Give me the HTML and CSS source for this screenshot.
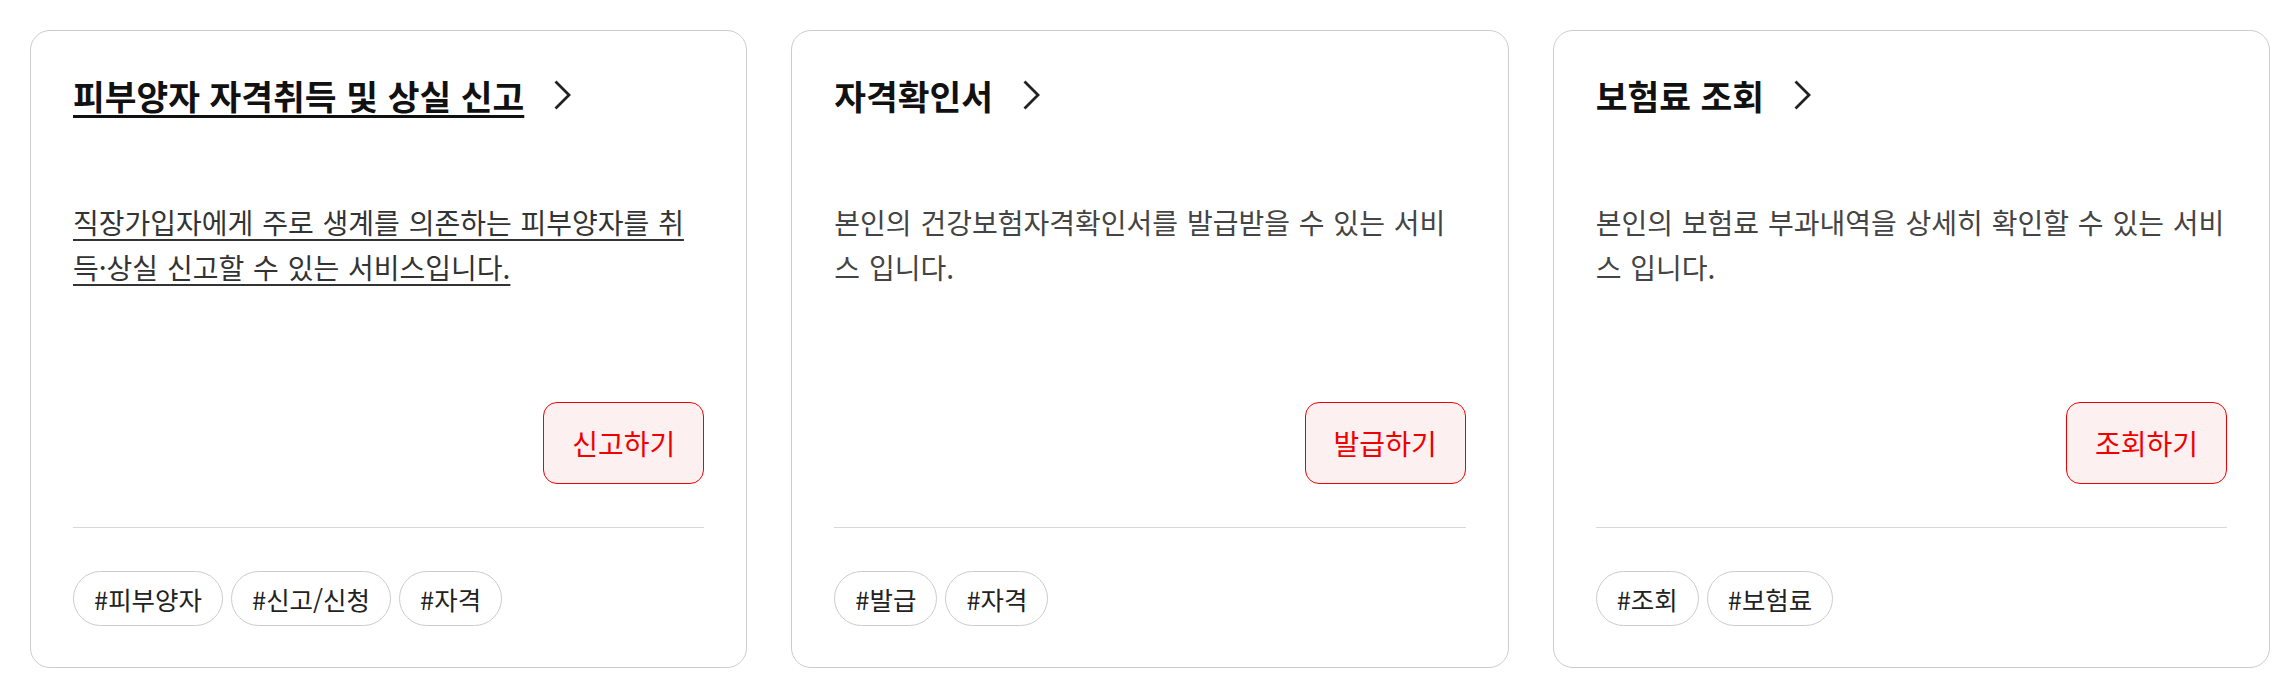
FILE: index.html
```html
<!DOCTYPE html>
<html lang="ko">
<head>
    <meta charset="UTF-8">
    <meta name="viewport" content="width=device-width, initial-scale=1.0">
    <title>자격 서비스</title>
    <link rel="stylesheet" href="styles.css">
</head>
<body>
    <main class="cards">
        <article class="card is-hover">
            <a class="card-title" href="#">
                <span>피부양자 자격취득 및 상실 신고</span>
                <svg class="chevron" viewBox="0 0 18 30" aria-hidden="true"><path d="M2.5 1.5 L16 15 L2.5 28.5"/></svg>
            </a>
            <p class="card-desc">직장가입자에게 주로 생계를 의존하는 피부양자를 취득·상실 신고할 수 있는 서비스입니다.</p>
            <button class="card-btn" type="button">신고하기</button>
            <ul class="tags">
                <li>#피부양자</li>
                <li>#신고/신청</li>
                <li>#자격</li>
            </ul>
        </article>

        <article class="card">
            <a class="card-title" href="#">
                <span>자격확인서</span>
                <svg class="chevron" viewBox="0 0 18 30" aria-hidden="true"><path d="M2.5 1.5 L16 15 L2.5 28.5"/></svg>
            </a>
            <p class="card-desc">본인의 건강보험자격확인서를 발급받을 수 있는 서비스 입니다.</p>
            <button class="card-btn" type="button">발급하기</button>
            <ul class="tags">
                <li>#발급</li>
                <li>#자격</li>
            </ul>
        </article>

        <article class="card">
            <a class="card-title" href="#">
                <span>보험료 조회</span>
                <svg class="chevron" viewBox="0 0 18 30" aria-hidden="true"><path d="M2.5 1.5 L16 15 L2.5 28.5"/></svg>
            </a>
            <p class="card-desc">본인의 보험료 부과내역을 상세히 확인할 수 있는 서비스 입니다.</p>
            <button class="card-btn" type="button">조회하기</button>
            <ul class="tags">
                <li>#조회</li>
                <li>#보험료</li>
            </ul>
        </article>
    </main>
</body>
</html>
```

FILE: styles.css
```css
* {
    box-sizing: border-box;
  }

  :root {
    --line: #cccccc;
    --title: #111111;
    --text: #444444;
    --red: #f00000;
    --red-bg: #fdf0f0;
  }

  body {
    margin: 0;
    background: #ffffff;
    font-family: "Noto Sans CJK KR", "Noto Sans", sans-serif;
    color: var(--text);
  }

  .cards {
    display: grid;
    grid-template-columns: repeat(3, 1fr);
    gap: 44px;
    padding: 30px 18px 0 30px;
  }

  .card {
    display: flex;
    flex-direction: column;
    border: 1px solid var(--line);
    border-radius: 20px;
    padding: 41px 42px;
  }

  .card-title {
    display: flex;
    align-items: center;
    gap: 29px;
    height: 46px;
    font-size: 34.5px;
    font-weight: 700;
    line-height: 46px;
    color: var(--title);
    text-decoration: none;

    & .chevron {
      width: 18px;
      height: 30px;
      flex: none;
      fill: none;
      stroke: #222222;
      stroke-width: 2.8;
    }
  }

  .card-desc {
    margin: 82px 0 0;
    font-size: 28px;
    line-height: 45px;
    word-spacing: 1px;
    color: var(--text);
  }

  .is-hover .card-title span,
  .is-hover .card-desc {
    text-decoration: underline;
    text-underline-offset: 5px;
  }

  .is-hover .card-title span {
    text-decoration-thickness: 3px;
  }

  .is-hover .card-desc {
    text-decoration-thickness: 2px;
    color: #333333;
  }

  .card-btn {
    align-self: flex-end;
    margin-top: 112px;
    padding: 21px 28px;
    font: inherit;
    font-size: 28px;
    line-height: 38px;
    color: var(--red);
    background: var(--red-bg);
    border: 1px solid var(--red);
    border-radius: 14px;
  }

  .tags {
    display: flex;
    gap: 8px;
    margin: 43px 0 0;
    padding: 43px 0 0;
    list-style: none;
    border-top: 1px solid #d8d8d8;

    & li {
      padding: 10px 20px;
      font-size: 25.5px;
      line-height: 33px;
      color: #222222;
      border: 1px solid var(--line);
      border-radius: 28px;
    }
  }
```
